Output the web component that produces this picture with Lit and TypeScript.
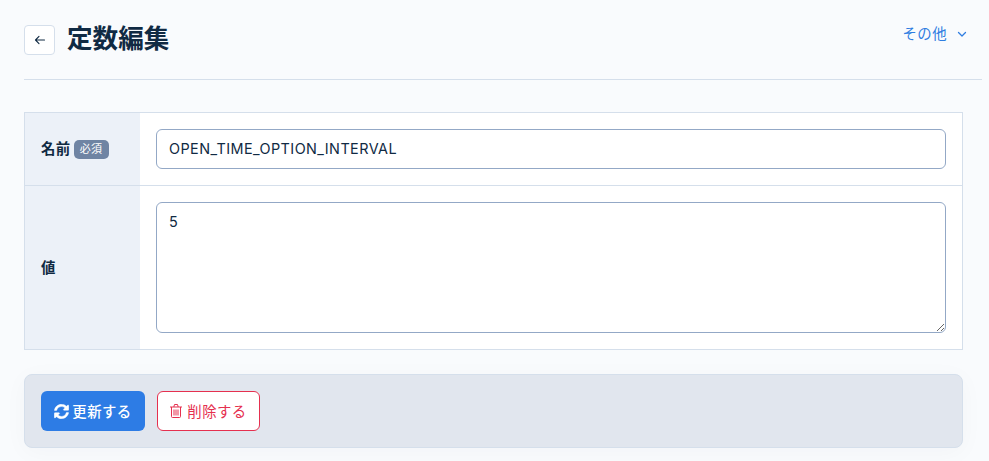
import { LitElement, html, css } from "lit";
import { customElement } from "lit/decorators.js";

@customElement("app-root")
export class AppRoot extends LitElement {
  static styles = css`
    :host {
      display: block;
      height: 461px;
      overflow: hidden;
      background: #f9fbfd;
      color: #0f2942;
      font-family: Inter, "Noto Sans CJK JP", sans-serif;
      font-size: 14.4px;
      letter-spacing: 0.03em;
    }
    .page {
      padding: 0 26px 0 24px;
    }
    .header {
      display: flex;
      justify-content: space-between;
      height: 79px;
      margin-right: -19px;
      border-bottom: 1px solid #d5dfeb;
    }
    .title-wrap {
      display: flex;
      align-items: center;
      gap: 12px;
      height: 78px;
    }
    .back {
      width: 31px;
      height: 30px;
      margin-top: 1px;
      box-sizing: border-box;
      border: 1px solid #d5dfeb;
      border-radius: 4px;
      background: #fff;
      display: flex;
      align-items: center;
      justify-content: center;
    }
    h1 {
      margin: 0;
      font-size: 25.6px;
      font-weight: 700;
      line-height: 1;
      letter-spacing: 0;
      color: #102a43;
    }
    .other {
      display: flex;
      align-items: center;
      gap: 10px;
      height: 20px;
      margin: 22px 15px 0 0;
      color: #2f7de1;
    }
    .other svg {
      margin-top: 4px;
    }
    .table {
      margin-top: 32px;
      border: 1px solid #d5dfeb;
      background: #fff;
    }
    .row {
      display: grid;
      grid-template-columns: 115px 1fr;
    }
    .row + .row {
      border-top: 1px solid #d5dfeb;
    }
    .label {
      background: #ecf1f8;
      display: flex;
      align-items: center;
      gap: 3px;
      padding-left: 16px;
      font-weight: 700;
      line-height: 20px;
    }
    .badge {
      background: #6f84a3;
      color: #fff;
      font-size: 11px;
      font-weight: 400;
      line-height: 19px;
      height: 19px;
      padding: 0 6px;
      border-radius: 5px;
    }
    .cell {
      padding: 16px;
    }
    .field {
      display: block;
      width: 100%;
      box-sizing: border-box;
      border: 1px solid #93a8c6;
      border-radius: 6px;
      background: #fff;
      padding: 0 12px;
      font: inherit;
      letter-spacing: inherit;
      color: #102a43;
      outline: none;
    }
    input.field {
      height: 40px;
      padding-bottom: 1px;
    }
    textarea.field {
      height: 131px;
      padding-top: 10px;
      resize: vertical;
    }
    .actions {
      margin-top: 24px;
      height: 72px;
      border: 1px solid #d5dfeb;
      border-radius: 8px;
      background: #e1e6ee;
      box-shadow: 0 4px 24px rgba(16, 42, 67, 0.03);
      display: flex;
      align-items: center;
      gap: 12px;
      padding: 0 16px;
    }
    .btn {
      height: 40px;
      box-sizing: border-box;
      border-radius: 6px;
      display: flex;
      align-items: center;
      justify-content: center;
    }
    .btn span {
      margin-bottom: 1px;
    }
    .primary {
      width: 104px;
      gap: 3px;
      background: #2d7ce5;
      color: #fff;
      font-weight: 500;
    }
    .danger {
      width: 103px;
      gap: 5px;
      background: #fff;
      border: 1px solid #e5304f;
      color: #e5304f;
    }
  `;

  render() {
    return html`
      <div class="page">
        <header class="header">
          <div class="title-wrap">
            <div class="back">
              <svg width="12" height="12" viewBox="0 0 12 12" fill="none" stroke="#102a43" stroke-width="1.1" stroke-linecap="round" stroke-linejoin="round">
                <path d="M10.500 6H1.500M5 2.400 1.500 6 5 9.600" />
              </svg>
            </div>
            <h1>定数編集</h1>
          </div>
          <div class="other">
            <span>その他</span>
            <svg width="10" height="10" viewBox="0 0 10 10" fill="none" stroke="#2f7de1" stroke-width="1.3" stroke-linecap="round" stroke-linejoin="round">
              <path d="M1.500 3.500 5 7l3.500-3.500" />
            </svg>
          </div>
        </header>

        <div class="table">
          <div class="row">
            <div class="label">名前<span class="badge">必須</span></div>
            <div class="cell"><input class="field" value="OPEN_TIME_OPTION_INTERVAL" /></div>
          </div>
          <div class="row">
            <div class="label">値</div>
            <div class="cell"><textarea class="field">5</textarea></div>
          </div>
        </div>

        <div class="actions">
          <div class="btn primary">
            <svg width="15" height="15" viewBox="0 0 512 512" fill="#fff" stroke="#fff" stroke-width="14">
              <path d="M370.700 133.300C339.500 104 298.900 88 255.800 88c-77.500 0-144.400 53.100-162.900 126.900-1.300 5.400-6.100 9.100-11.600 9.100H24.100c-7.500 0-13.200-6.800-11.800-14.200C33.900 94.900 134.800 8 256 8c66.500 0 126.800 26.100 171.300 68.700L463 41c15.100-15.100 41-4.400 41 17v134c0 13.300-10.700 24-24 24H346c-21.400 0-32.100-25.900-17-41l41.700-41.700zM32 296h134c21.400 0 32.100 25.900 17 41l-41.700 41.700c31.200 29.300 71.800 45.300 114.900 45.300 77.400 0 144.300-53.100 162.900-126.800 1.300-5.400 6.100-9.100 11.600-9.100h57.300c7.500 0 13.200 6.800 11.800 14.200C478.100 417.100 377.200 504 256 504c-66.500 0-126.800-26.100-171.300-68.700L49 471c-15.100 15.100-41 4.400-41-17V320c0-13.300 10.700-24 24-24z"/>
            </svg>
            <span>更新する</span>
          </div>
          <div class="btn danger">
            <svg width="12" height="14" viewBox="0 0 12 14" fill="none" stroke="#e5304f" stroke-width="1" stroke-linejoin="round">
              <path d="M0 3h12M1.500 3v9.500a1 1 0 0 0 1 1h7a1 1 0 0 0 1-1V3M3.800 3l.7-2.500h3L8.200 3M4 5.500v6M6 5.500v6M8 5.500v6" />
            </svg>
            <span>削除する</span>
          </div>
        </div>
      </div>
    `;
  }
}
